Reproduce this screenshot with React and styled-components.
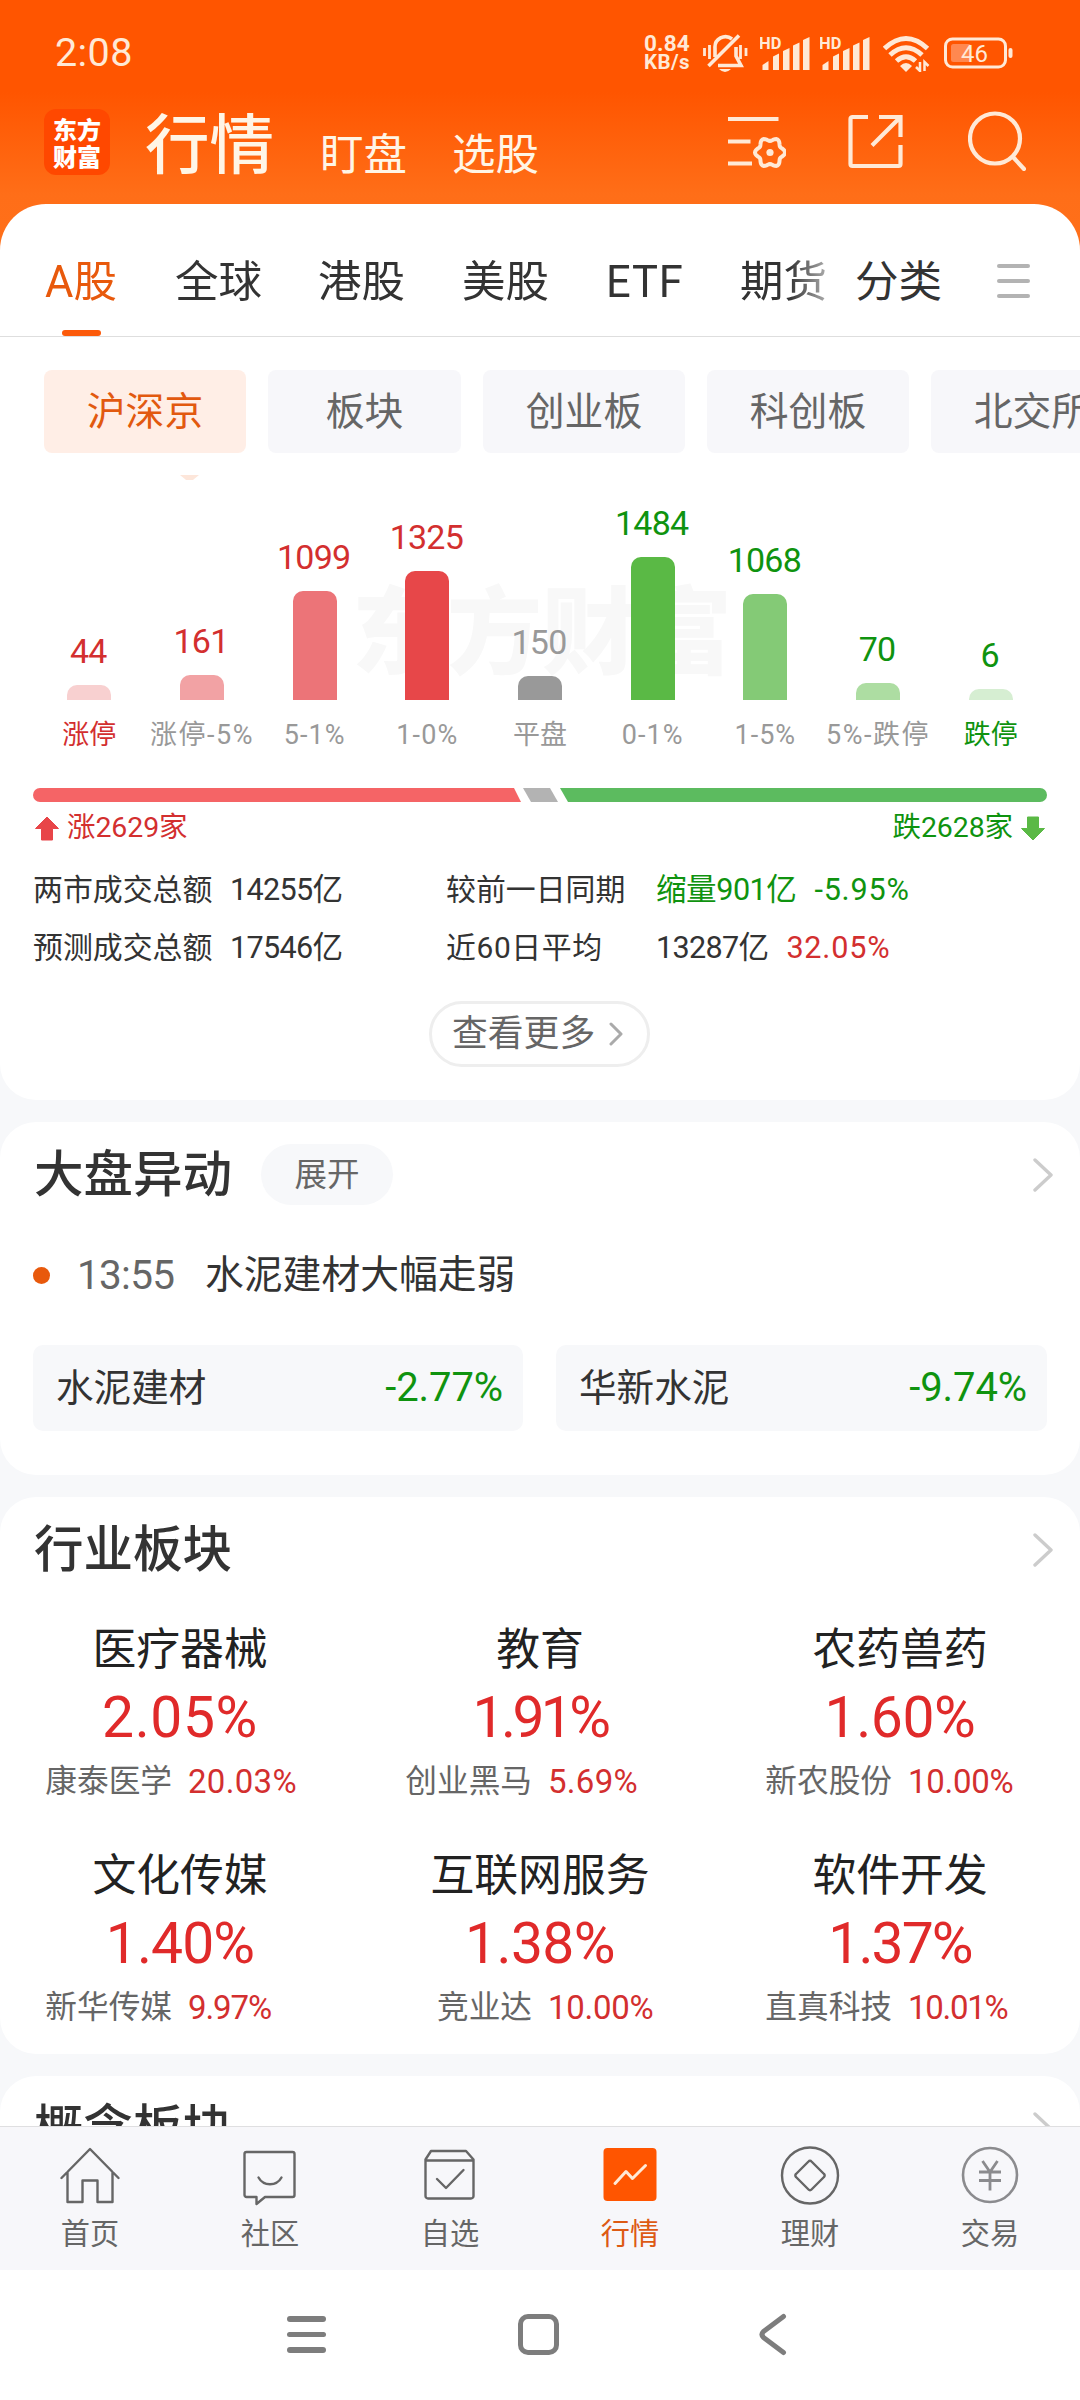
import React from "react";
import styled, { createGlobalStyle } from "styled-components";

const RED = "#d32f2f";
const GREEN = "#0f930f";
const ORANGE = "#e8590c";
const CREAM = "#ffe9d6";

const Global = createGlobalStyle`
  * { box-sizing: border-box; }
  body { margin: 0; background: #fff; }
  #root { font-family: Roboto, "Noto Sans CJK SC", sans-serif; color: #333; }
`;

const Page = styled.div`
  width: 1080px;
  height: 2400px;
  display: flex;
  flex-direction: column;
  overflow: hidden;
  background: #fff;
`;
const Content = styled.main`
  height: 2126px;
  overflow: hidden;
  display: flex;
  flex-direction: column;
  background: linear-gradient(#ff5500 0 92px, #ff6e18 195px, #ff701a 260px) 0 0 / 100% 260px no-repeat, #f7f8fa;
`;

/* status bar */
const StatusBar = styled.div`
  flex: none;
  height: 105px;
  padding: 0 66px 0 55px;
  display: flex;
  align-items: center;
  color: ${CREAM};
`;
const Clock = styled.div`
  font-size: 39.5px;
  line-height: 40px;
  letter-spacing: 0.4px;
  margin-right: auto;
`;
const Speed = styled.div`
  width: 47px;
  font-weight: 700;
  font-size: 22.5px;
  line-height: 19px;
  letter-spacing: 0.1px;
  white-space: nowrap;
  margin-right: 12px;
  div + div { font-size: 20.5px; line-height: 19px; letter-spacing: 0.4px; }
`;
const StatusSvg = styled.svg`
  flex: none;
  display: block;
  margin-left: ${(p) => p.$ml || 0}px;
`;

/* app header */
const Header = styled.header`
  flex: none;
  height: 99px;
  padding: 0 54px 0 44px;
  display: flex;
  align-items: flex-start;
  color: #fff5e6;
`;
const Logo = styled.div`
  width: 66px;
  height: 66px;
  margin-top: 4px;
  padding-top: 6px;
  border-radius: 12px;
  background: #ff4800;
  color: #fff;
  font-family: "Noto Sans CJK SC", sans-serif;
  font-size: 24px;
  font-weight: 900;
  line-height: 27px;
  text-align: center;
`;
const HeadTab = styled.div`
  font-size: ${(p) => p.$size}px;
  font-weight: ${(p) => (p.$active ? 500 : 400)};
  line-height: 70px;
  margin: ${(p) => p.$top}px 0 0 ${(p) => p.$left}px;
  white-space: nowrap;
`;
const HeadIcons = styled.div`
  margin: 6px 0 0 auto;
  display: flex;
  align-items: flex-start;
  svg { display: block; }
`;
const GearList = styled.svg` margin-right: 62px; `;
const Share = styled.svg` margin-right: 65px; `;

/* cards */
const Card = styled.section`
  flex: none;
  height: ${(p) => p.$h}px;
  margin-bottom: 22px;
  padding: 0 33px;
  background: #fff;
  border-radius: 36px;
  display: flex;
  flex-direction: column;
`;
const MarketCard = styled(Card)`
  padding: 0;
  border-radius: 46px 46px 36px 36px;
`;

const TabBar = styled.nav`
  flex: none;
  height: 133px;
  padding: 0 50px 0 44px;
  border-bottom: 1px solid #dedede;
  display: flex;
  align-items: stretch;
`;
const TabList = styled.div`
  width: 788px;
  overflow: hidden;
  display: flex;
  gap: 56px;
  mask-image: linear-gradient(90deg, #000 745px, rgba(0, 0, 0, 0.4) 783px);
`;
const Tab = styled.div`
  flex: none;
  width: ${(p) => p.$w}px;
  padding: 56px 0 0 1px;
  font-size: 43.5px;
  line-height: 46px;
  white-space: nowrap;
  letter-spacing: ${(p) => p.$ls || 0}px;
  color: ${(p) => (p.$active ? ORANGE : "#333")};
  display: flex;
  flex-direction: column;
  justify-content: space-between;
`;
const Underline = styled.div`
  width: 39px;
  height: 6px;
  margin-left: 17px;
  border-radius: 3px;
  background: #fc5a0a;
`;
const Category = styled(Tab)` margin-left: 22px; `;
const Lines = styled.div`
  width: ${(p) => p.$w}px;
  display: flex;
  flex-direction: column;
  gap: ${(p) => p.$gap}px;
  i { height: ${(p) => p.$t}px; border-radius: 3px; background: ${(p) => p.$c}; }
`;
const TabMenu = styled(Lines)` margin: 60px 0 0 auto; `;

const Chips = styled.div`
  flex: none;
  height: 116px;
  padding: 33px 0 0 44px;
  display: flex;
  gap: 22px;
  overflow: hidden;
`;
const Chip = styled.div`
  flex: none;
  width: ${(p) => p.$w || 202}px;
  height: 83px;
  border-radius: 8px;
  font-size: 38.8px;
  line-height: 84px;
  text-align: center;
  white-space: nowrap;
  color: ${(p) => (p.$active ? "#e2590f" : "#666")};
  background: ${(p) => (p.$active ? "#ffeee6" : "#f7f7fa")};
`;

const Chart = styled.div`
  flex: none;
  position: relative;
  height: 296px;
  padding: 0 33px;
  display: grid;
  grid-template-columns: repeat(9, 1fr);
`;
const Watermark = styled.div`
  position: absolute;
  left: 352px;
  top: 127px;
  font-size: 95px;
  line-height: 110px;
  font-weight: 900;
  color: #f8f8f8;
  white-space: nowrap;
`;
const Pointer = styled.div`
  position: absolute;
  left: 180px;
  top: 22px;
  width: 19px;
  height: 5px;
  clip-path: polygon(0 0, 100% 0, 68% 100%, 32% 100%);
  background: #fde6da;
`;
const Column = styled.div`
  position: relative;
  display: flex;
  flex-direction: column;
  align-items: center;
  justify-content: flex-end;
  color: ${(p) => p.$c};
`;
const BarValue = styled.div`
  font-size: 34px;
  line-height: 34px;
  letter-spacing: -0.8px;
  margin: 0 0 17px -2px;
`;
const Bar = styled.div`
  width: 44px;
  border-radius: 10px 10px 0 0;
  background: ${(p) => p.$bg};
`;
const BarLabel = styled.div`
  margin-top: 21px;
  height: 28px;
  font-size: 27px;
  line-height: 28px;
  letter-spacing: ${(p) => p.$ls}px;
  white-space: nowrap;
  color: ${(p) => p.$c};
`;

const Ratio = styled.div`
  flex: none;
  height: 14px;
  margin: 39px 33px 0;
  display: flex;
`;
const RatioPart = styled.div`
  width: ${(p) => p.$w}px;
  margin-right: ${(p) => p.$mr || 0}px;
  background: ${(p) => p.$bg};
  border-radius: ${(p) => p.$r || 0};
  clip-path: ${(p) => p.$clip};
`;
const Counts = styled.div`
  flex: none;
  height: 50px;
  padding: 2px 35px 0;
  display: flex;
  align-items: center;
  justify-content: space-between;
`;
const Count = styled.div`
  display: flex;
  align-items: center;
  gap: 8px;
  font-size: 28.5px;
  line-height: 30px;
  letter-spacing: -0.1px;
  color: ${(p) => p.$c};
`;
const Stats = styled.div`
  flex: none;
  margin-top: 9px;
  padding-left: 33px;
  display: grid;
  grid-template-columns: 197px 216px 210px auto;
  grid-auto-rows: 58px;
  align-items: center;
  font-size: 29.9px;
  line-height: 32px;
  white-space: nowrap;
`;
const Stat = styled.div`
  display: flex;
  gap: ${(p) => p.$gap || 0}px;
  font-size: ${(p) => (p.$value ? 30.6 : 29.9)}px;
  letter-spacing: ${(p) => (p.$value ? -0.7 : p.$ls || 0)}px;
`;
const Tint = styled.span`
  color: ${(p) => p.$c};
  letter-spacing: ${(p) => p.$ls || 0}px;
`;
const More = styled.button`
  flex: none;
  width: 221px;
  height: 66px;
  margin: 24px 0 0 429px;
  padding: 0 24px 0 20px;
  border: 3px solid #eee;
  border-radius: 33px;
  background: #fff;
  color: #666;
  font: 35.8px/40px Roboto, "Noto Sans CJK SC", sans-serif;
  white-space: nowrap;
  display: flex;
  align-items: center;
  justify-content: space-between;
`;

const TitleRow = styled.div`
  flex: none;
  height: 105px;
  margin-right: -6px;
  display: flex;
  align-items: center;
  justify-content: space-between;
`;
const TitleGroup = styled.div`
  display: flex;
  align-items: center;
  gap: 29px;
`;
const Title = styled.h2`
  margin: 0;
  padding: 1px 0 0 1px;
  font-size: 49.5px;
  line-height: 60px;
  font-weight: 500;
`;
const Pill = styled.div`
  width: 132px;
  height: 61px;
  border-radius: 31px;
  background: #f7f8fa;
  color: #666;
  font-size: 32.5px;
  line-height: 62px;
  text-align: center;
`;
const Event = styled.div`
  flex: none;
  height: 96px;
  display: flex;
  align-items: center;
  font-size: 38.8px;
  line-height: 44px;
`;
const Dot = styled.i`
  width: 17px;
  height: 17px;
  border-radius: 50%;
  background: ${ORANGE};
`;
const EventTime = styled.span`
  width: 128px;
  margin-left: 27px;
  font-size: 40.5px;
  letter-spacing: -0.7px;
  color: #666;
`;
const Quotes = styled.div`
  margin-top: 22px;
  display: grid;
  grid-template-columns: 490px 491px;
  gap: 33px;
`;
const Quote = styled.div`
  height: 86px;
  padding: 0 20px 0 23px;
  border-radius: 10px;
  background: #f7f8fa;
  display: flex;
  align-items: center;
  justify-content: space-between;
  font-size: 37.6px;
  line-height: 44px;
  span { font-size: 40px; color: ${GREEN}; letter-spacing: -0.1px; }
`;

const Sectors = styled.div`
  margin: 15px -33px 0;
  display: grid;
  grid-template-columns: repeat(3, 360px);
  grid-auto-rows: 226px;
`;
const Sector = styled.div`
  display: flex;
  flex-direction: column;
  align-items: center;
`;
const SectorName = styled.div`
  height: 66px;
  font-size: 43.8px;
  line-height: 66px;
  color: #222;
`;
const SectorPct = styled.div`
  height: 68px;
  font-size: 57px;
  line-height: 70px;
  letter-spacing: ${(p) => p.$ls}px;
  color: #e02a2a;
`;
const Leader = styled.div`
  width: 360px;
  display: grid;
  grid-template-columns: 172px 1fr;
  gap: 16px;
  font-size: 31.7px;
  line-height: 62px;
  color: #666;
  white-space: nowrap;
  div:first-child { text-align: right; }
  div:last-child { color: ${RED}; font-size: 33px; letter-spacing: ${(p) => p.$ls}px; }
`;

const BottomNav = styled.nav`
  flex: none;
  height: 144px;
  border-top: 1px solid #dfdfe1;
  background: #f7f7fa;
  display: grid;
  grid-template-columns: repeat(6, 180px);
`;
const NavItem = styled.div`
  display: flex;
  flex-direction: column;
  align-items: center;
  padding-top: 17px;
  font-size: 29.2px;
  line-height: 34px;
  color: ${(p) => (p.$active ? "#dd5a14" : "#666")};
  svg { display: block; margin-bottom: 10px; }
`;
const SystemNav = styled.div`
  flex: none;
  height: 130px;
  padding: 41px 292px 0 287px;
  display: flex;
  justify-content: space-between;
  align-items: flex-start;
`;
const SysMenu = styled(Lines)` margin-top: 5px; `;
const HomeKey = styled.div`
  width: 41px;
  height: 41px;
  margin: 3px 0 0 -7px;
  border: 5px solid #7d7d7d;
  border-radius: 10px;
`;

const gearPoints = Array.from({ length: 72 }, (_, i) => {
  const a = (i * Math.PI) / 36;
  const r = 13.3 + 1.7 * Math.cos(6 * a);
  return `${(42 + r * Math.cos(a)).toFixed(2)},${(40.5 + r * Math.sin(a)).toFixed(2)}`;
}).join(" ");

const Signal = ({ ml }) => (
  <StatusSvg $ml={ml} width="50" height="34" fill={CREAM}>
    <text x="-1" y="13" fontSize="16.500" fontWeight="700" fontFamily="Roboto">HD</text>
    <path d="M2.500 34v-5l6-4v9zM13 34V20.500l6-3V34zM23 34V15l6.500-3V34zM33 34V9.500l6.500-3V34zM43 34V4l6.500-3V34z" />
  </StatusSvg>
);

const Chevron = ({ w = 20, h = 34, c = "#ccc", s = 3.4 }) => (
  <svg width={w} height={h} fill="none" stroke={c} strokeWidth={s} strokeLinecap="round" strokeLinejoin="round">
    <path d={`M2 2L${w - 2} ${h / 2}L2 ${h - 2}`} />
  </svg>
);

const Arrow = ({ down }) => (
  <svg width="24" height="25" fill={down ? "#5ab945" : "#e84548"} stroke={down ? "#5ab945" : "#e84548"} strokeLinejoin="round">
    <path d={down ? "M6.500 1h11v11.500h6L12 24 .5 12.500h6z" : "M6.500 24h11V12.500h6L12 1 .5 12.500h6z"} />
  </svg>
);

const bars = [
  ["44", 15, "#f8d0d0", "涨停", RED, RED, 0],
  ["161", 25, "#f2a2a4", "涨停-5%", RED, "#999", 1.5],
  ["1099", 109, "#ec7478", "5-1%", RED, "#999", 1],
  ["1325", 129, "#e74749", "1-0%", RED, "#999", 1.2],
  ["150", 24, "#999", "平盘", "#999", "#999", 0],
  ["1484", 143, "#5ab945", "0-1%", GREEN, "#999", 1],
  ["1068", 106, "#84ca76", "1-5%", GREEN, "#999", 1],
  ["70", 17, "#addda2", "5%-跌停", GREEN, "#999", 1.5],
  ["6", 11, "#d6eed2", "跌停", GREEN, GREEN, 0],
];

const sectors = [
  ["医疗器械", "2.05%", "康泰医学", "20.03%", 0.6, 0.3],
  ["教育", "1.91%", "创业黑马", "5.69%", -3.6, 0.3],
  ["农药兽药", "1.60%", "新农股份", "10.00%", -0.4, -0.3],
  ["文化传媒", "1.40%", "新华传媒", "9.97%", -0.9, -1.1],
  ["互联网服务", "1.38%", "竞业达", "10.00%", -0.6, -0.3],
  ["软件开发", "1.37%", "直真科技", "10.01%", -1.9, -1.3],
];

const navItems = [
  ["首页", <g key="i"><path d="M1.500 34L30 5l28.500 29M7.500 28v30H22.500V36.500h15V58H52.500V28" /></g>],
  ["社区", <g key="i"><path d="M6.500 8h46a2 2 0 0 1 2 2v41a2 2 0 0 1-2 2H25l-8.500 7v-7H6.500a2 2 0 0 1-2-2V10a2 2 0 0 1 2-2z" /><path d="M18.500 33.500c5 9 18 9 23 0" /></g>],
  ["自选", <g key="i"><path d="M11 7h35l7.500 8.500V52a2.500 2.500 0 0 1-2.500 2.500H8A2.500 2.500 0 0 1 5.500 52V15.500zM6 16.500h47M17 35l9 9 17.500-18" /></g>],
  ["行情", <g key="i"><rect x="3.500" y="4" width="53" height="53" rx="4" fill="#ff5500" stroke="none" /><path d="M15 39.500l11-12 6.500 7L45.500 21.500" stroke="#ffe9d6" strokeWidth="3" /></g>],
  ["理财", <g key="i"><circle cx="30" cy="31.500" r="28" /><path d="M28.500 17.500L16 30a2 2 0 0 0 0 3L28.500 45.500a2 2 0 0 0 3 0L44 33a2 2 0 0 0 0-3L31.500 17.500a2 2 0 0 0-3 0z" /></g>],
  ["交易", <g key="i" stroke="#8b8b8e"><circle cx="30" cy="31" r="27" strokeWidth="2.600" /><path d="M22.500 17L30 28l7.500-11M19 28h22M19 36.500h22M30 28v18.500" strokeWidth="2.800" strokeLinecap="butt" /></g>],
];

export default function App() {
  return (
    <Page>
      <Global />
      <Content>
        <StatusBar>
          <Clock>2:08</Clock>
          <Speed><div>0.84</div><div>KB/s</div></Speed>
          <StatusSvg width="45" height="38" fill="none" stroke={CREAM} strokeWidth="3.600">
            <path d="M12 23V14A10.500 10.500 0 0 1 29 5M33 13v9l5 9.500H15M5.500 32L36 1.500" />
            <path d="M16 35h12q-6 6-12 0z" fill={CREAM} stroke="none" />
            <path d="M1.500 14v8M6.500 11v14M37.500 11v14M43 14v8" strokeWidth="2.800" />
          </StatusSvg>
          <Signal ml={12} />
          <Signal ml={10} />
          <StatusSvg $ml={13} width="47" height="38" fill="none" stroke={CREAM} strokeWidth="5">
            <path d="M1.500 14.500Q23 -5.500 44.500 14.500M7 21Q23 6.500 39 21M13.500 27Q23 18.500 32.500 27" />
            <path d="M17 32q6-6 12 0l-6 6z" fill={CREAM} stroke="none" />
            <path d="M37 28v9l-4-4M41.500 37v-9l4 4" strokeWidth="2.500" />
          </StatusSvg>
          <StatusSvg $ml={14} width="70" height="32">
            <rect x="1.500" y="2" width="60" height="28" rx="7" fill="none" stroke={CREAM} strokeWidth="3" />
            <rect x="7" y="7" width="20" height="18" rx="2.500" fill="#ff8850" />
            <rect x="64.500" y="11" width="4" height="10" rx="2" fill={CREAM} />
            <text x="17" y="24.500" fontSize="24" fill={CREAM} fontFamily="Roboto">46</text>
          </StatusSvg>
        </StatusBar>

        <Header>
          <Logo><div>东方</div><div>财富</div></Logo>
          <HeadTab $active $size={64.5} $left={35} $top={6}>行情</HeadTab>
          <HeadTab $size={43.5} $left={46} $top={16}>盯盘</HeadTab>
          <HeadTab $size={43.5} $left={45} $top={16}>选股</HeadTab>
          <HeadIcons>
            <GearList width="58" height="60" fill="none" stroke={CREAM} strokeWidth="4.200">
              <path d="M0 8h50.500M0 30.500h22.500M0 52.500h24" />
              <polygon points={gearPoints} transform="translate(0 1)" strokeWidth="4" />
              <circle cx="42" cy="41.500" r="3.600" fill={CREAM} stroke="none" />
            </GearList>
            <Share width="55" height="60" fill="none" stroke={CREAM} strokeWidth="4.200">
              <path d="M20 6H4.500a2 2 0 0 0-2 2v45a2 2 0 0 0 2 2h46a2 2 0 0 0 2-2V34M31 6h21.500v20M52.500 6L24 34.500" />
            </Share>
            <svg width="58" height="60" fill="none" stroke={CREAM} strokeWidth="4.200" strokeLinecap="round">
              <circle cx="27" cy="27.500" r="25" />
              <path d="M45 46L56 58" />
            </svg>
          </HeadIcons>
        </Header>

        <MarketCard $h={896}>
          <TabBar>
            <TabList>
              <Tab $active $w={74}>A股<Underline /></Tab>
              <Tab $w={87}>全球</Tab>
              <Tab $w={88}>港股</Tab>
              <Tab $w={88}>美股</Tab>
              <Tab $w={78} $ls={0.8}>ETF</Tab>
              <Tab $w={87}>期货</Tab>
            </TabList>
            <Category $w={88}>分类</Category>
            <TabMenu $w={33} $gap={11} $t={4} $c="#b3b3b3"><i /><i /><i /></TabMenu>
          </TabBar>
          <Chips>
            <Chip $active>沪深京</Chip>
            <Chip $w={193}>板块</Chip>
            <Chip>创业板</Chip>
            <Chip>科创板</Chip>
            <Chip>北交所</Chip>
          </Chips>
          <Chart>
            <Watermark>东方财富</Watermark>
            <Pointer />
            {bars.map(([n, h, bg, label, c, lc, ls]) => (
              <Column key={label} $c={c}>
                <BarValue>{n}</BarValue>
                <Bar $bg={bg} style={{ height: h }} />
                <BarLabel $c={lc} $ls={ls}>{label}</BarLabel>
              </Column>
            ))}
          </Chart>
          <Ratio>
            <RatioPart $w={488} $mr={2} $bg="#f56466" $r="7px 0 0 7px" $clip="polygon(0 0, 481px 0, 100% 100%, 0 100%)" />
            <RatioPart $w={35} $mr={2} $bg="#b3b3b3" $clip="polygon(0 0, 27px 0, 100% 100%, 8px 100%)" />
            <RatioPart $w={487} $bg="#5cbb5f" $r="0 7px 7px 0" $clip="polygon(0 0, 100% 0, 100% 100%, 8px 100%)" />
          </Ratio>
          <Counts>
            <Count $c={RED}><Arrow />涨2629家</Count>
            <Count $c={GREEN}>跌2628家<Arrow down /></Count>
          </Counts>
          <Stats>
            <Stat>两市成交总额</Stat>
            <Stat $value>14255亿</Stat>
            <Stat>较前一日同期</Stat>
            <Stat $value $gap={18}><Tint $c={GREEN} $ls={-0.5}>缩量901亿</Tint><Tint $c={GREEN} $ls={0.8}>-5.95%</Tint></Stat>
            <Stat>预测成交总额</Stat>
            <Stat $value>17546亿</Stat>
            <Stat $ls={0.6}>近60日平均</Stat>
            <Stat $value $gap={18}>13287亿<Tint $c={RED} $ls={0.8}>32.05%</Tint></Stat>
          </Stats>
          <More>查看更多<Chevron w={14} h={24} c="#aaa" s={3} /></More>
        </MarketCard>

        <Card $h={353}>
          <TitleRow>
            <TitleGroup><Title>大盘异动</Title><Pill>展开</Pill></TitleGroup>
            <Chevron />
          </TitleRow>
          <Event><Dot /><EventTime>13:55</EventTime>水泥建材大幅走弱</Event>
          <Quotes>
            <Quote>水泥建材<span>-2.77%</span></Quote>
            <Quote>华新水泥<span>-9.74%</span></Quote>
          </Quotes>
        </Card>

        <Card $h={557}>
          <TitleRow><Title>行业板块</Title><Chevron /></TitleRow>
          <Sectors>
            {sectors.map(([name, pct, stock, sp, pl, sl]) => (
              <Sector key={name}>
                <SectorName>{name}</SectorName>
                <SectorPct $ls={pl}>{pct}</SectorPct>
                <Leader $ls={sl}><div>{stock}</div><div>{sp}</div></Leader>
              </Sector>
            ))}
          </Sectors>
        </Card>

        <Card $h={300}>
          <TitleRow><Title>概念板块</Title><Chevron /></TitleRow>
        </Card>
      </Content>

      <BottomNav>
        {navItems.map(([label, icon]) => (
          <NavItem key={label} $active={label === "行情"}>
            <svg width="60" height="63" fill="none" stroke="#666" strokeWidth="2.400" strokeLinecap="round" strokeLinejoin="round">{icon}</svg>
            {label}
          </NavItem>
        ))}
      </BottomNav>
      <SystemNav>
        <SysMenu $w={39} $gap={10} $t={5.5} $c="#7d7d7d"><i /><i /><i /></SysMenu>
        <HomeKey />
        <svg width="30" height="46" fill="none" stroke="#7d7d7d" strokeWidth="5" strokeLinecap="round" strokeLinejoin="round">
          <path d="M25.500 5.500L5.500 20.500Q2.500 23.500 5.500 26.500L25.500 41.500" />
        </svg>
      </SystemNav>
    </Page>
  );
}
